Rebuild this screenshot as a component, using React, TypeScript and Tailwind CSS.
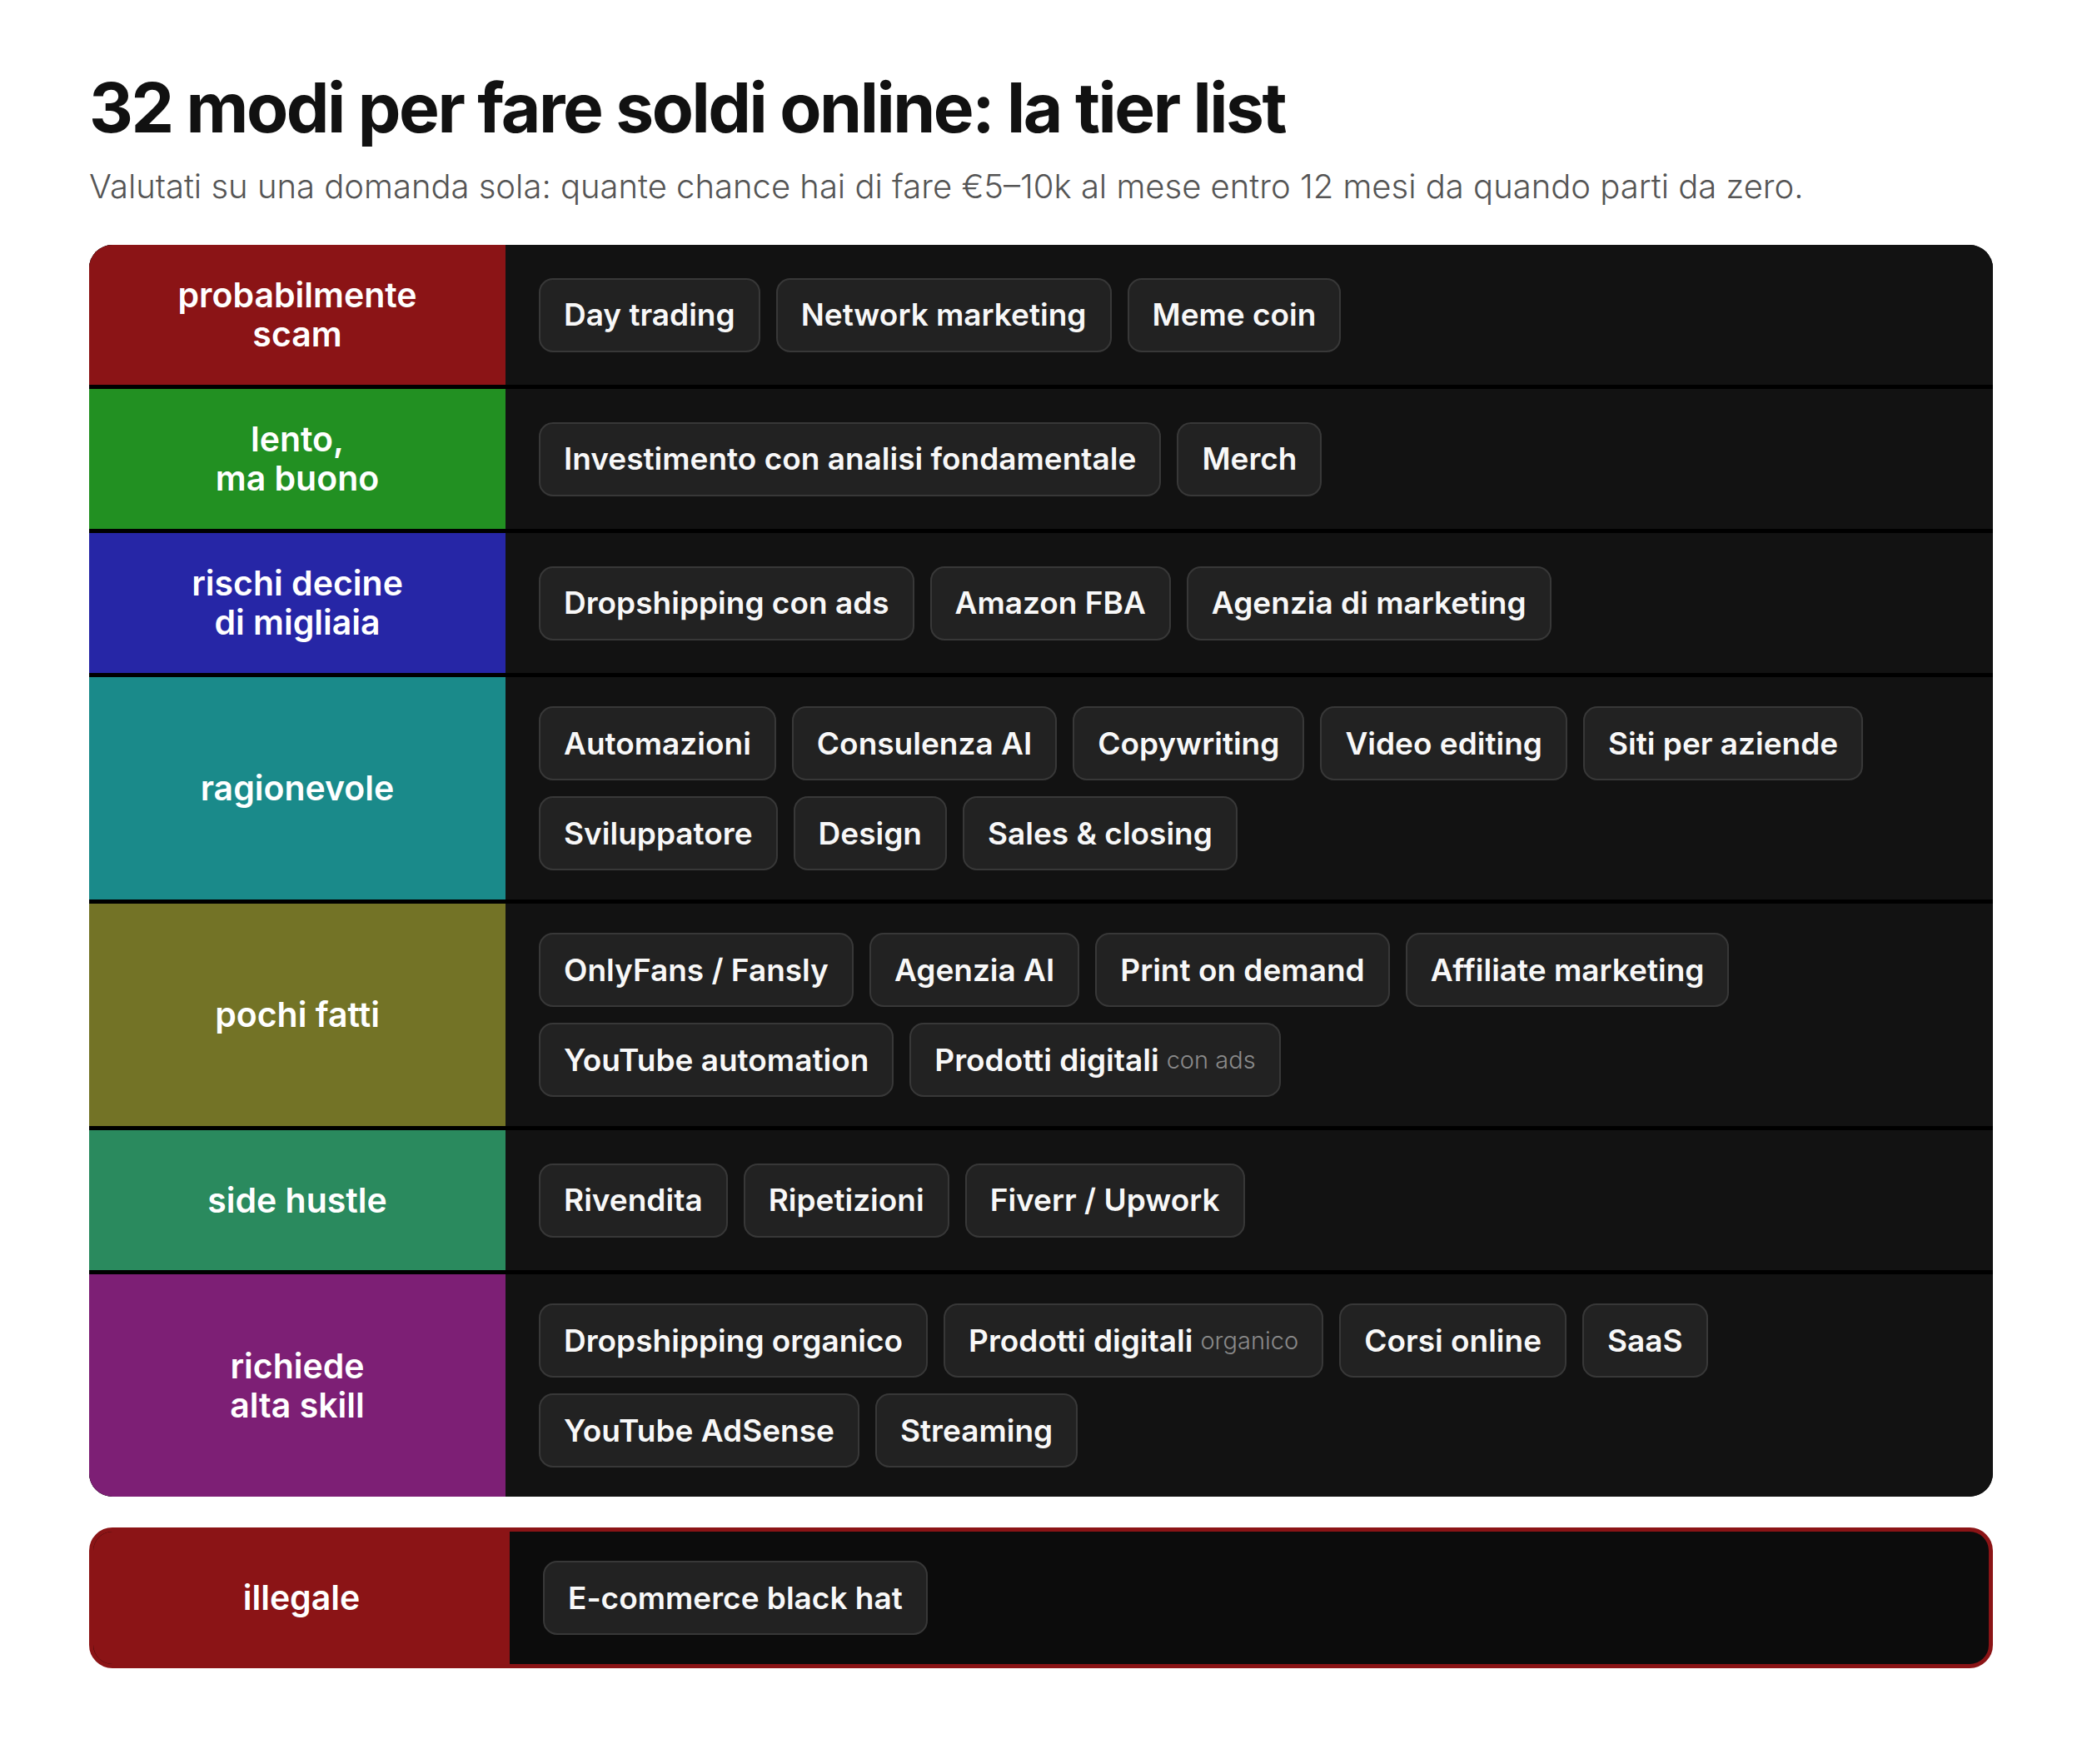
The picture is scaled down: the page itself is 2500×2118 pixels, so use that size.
import React from 'react';

interface Chip {
  name: string;
  note?: string;
}

interface Tier {
  label: string[];
  color: string;
  chips: Chip[];
}

const tiers: Tier[] = [
  {
    label: ['probabilmente', 'scam'],
    color: 'bg-[#8b1416]',
    chips: [{ name: 'Day trading' }, { name: 'Network marketing' }, { name: 'Meme coin' }],
  },
  {
    label: ['lento,', 'ma buono'],
    color: 'bg-[#229022]',
    chips: [{ name: 'Investimento con analisi fondamentale' }, { name: 'Merch' }],
  },
  {
    label: ['rischi decine', 'di migliaia'],
    color: 'bg-[#2626a6]',
    chips: [{ name: 'Dropshipping con ads' }, { name: 'Amazon FBA' }, { name: 'Agenzia di marketing' }],
  },
  {
    label: ['ragionevole'],
    color: 'bg-[#1a8a8a]',
    chips: [
      { name: 'Automazioni' },
      { name: 'Consulenza AI' },
      { name: 'Copywriting' },
      { name: 'Video editing' },
      { name: 'Siti per aziende' },
      { name: 'Sviluppatore' },
      { name: 'Design' },
      { name: 'Sales & closing' },
    ],
  },
  {
    label: ['pochi fatti'],
    color: 'bg-[#737326]',
    chips: [
      { name: 'OnlyFans / Fansly' },
      { name: 'Agenzia AI' },
      { name: 'Print on demand' },
      { name: 'Affiliate marketing' },
      { name: 'YouTube automation' },
      { name: 'Prodotti digitali', note: 'con ads' },
    ],
  },
  {
    label: ['side hustle'],
    color: 'bg-[#2a8a5e]',
    chips: [{ name: 'Rivendita' }, { name: 'Ripetizioni' }, { name: 'Fiverr / Upwork' }],
  },
  {
    label: ['richiede', 'alta skill'],
    color: 'bg-[#7d1f75]',
    chips: [
      { name: 'Dropshipping organico' },
      { name: 'Prodotti digitali', note: 'organico' },
      { name: 'Corsi online' },
      { name: 'SaaS' },
      { name: 'YouTube AdSense' },
      { name: 'Streaming' },
    ],
  },
];

function TierChip({ chip }: { chip: Chip }) {
  return (
    <div className="flex h-[89px] items-center gap-[9px] rounded-[17px] border-[2px] border-[#383838] bg-[#222222] px-[28px] text-[37px] font-semibold text-[#f8f8f8]">
      <span>{chip.name}</span>
      {chip.note && <span className="text-[29px] font-light text-[#8a8a8a]">{chip.note}</span>}
    </div>
  );
}

function TierLabel({ lines, color, width }: { lines: string[]; color: string; width: string }) {
  return (
    <div className={`flex shrink-0 items-center justify-center text-center text-[41px] leading-[47px] font-semibold text-white ${color} ${width}`}>
      <div>
        {lines.map((l) => (
          <div key={l}>{l}</div>
        ))}
      </div>
    </div>
  );
}

export default function App() {
  return (
    <div className="min-h-[2118px] bg-white px-[107px] pt-[80px] font-['Inter',sans-serif]">
      <h1 className="text-[82px] leading-[100px] font-bold tracking-[-0.03em] text-[#111111]">
        32 modi per fare soldi online: la tier list
      </h1>
      <p className="mt-[18px] text-[40px] leading-[52px] font-light text-[#555555]">
        Valutati su una domanda sola: quante chance hai di fare €5–10k al mese entro 12 mesi da quando parti da zero.
      </p>

      <div className="mt-[44px] flex flex-col gap-[5px] overflow-hidden rounded-[28px] bg-black">
        {tiers.map((t) => (
          <div key={t.label[0]} className="flex min-h-[168px] bg-[#121212]">
            <TierLabel lines={t.label} color={t.color} width="w-[500px]" />
            <div className="flex flex-1 flex-wrap content-center items-center gap-[19px] px-[40px] py-[35px]">
              {t.chips.map((c) => (
                <TierChip key={c.name + (c.note ?? '')} chip={c} />
              ))}
            </div>
          </div>
        ))}
      </div>

      <div className="mt-[37px] flex overflow-hidden rounded-[28px] border-[5px] border-[#8b1416] bg-[#0c0c0c]">
        <TierLabel lines={['illegale']} color="bg-[#8b1416]" width="w-[500px]" />
        <div className="flex flex-1 flex-wrap items-center gap-[19px] px-[40px] py-[35px]">
          <TierChip chip={{ name: 'E-commerce black hat' }} />
        </div>
      </div>
    </div>
  );
}
